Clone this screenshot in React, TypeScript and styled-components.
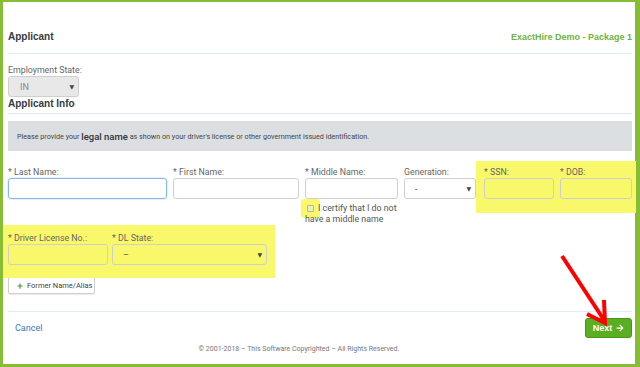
// Import Dependencies
import styled, { createGlobalStyle } from "styled-components";
import type { FunctionComponent } from "react";
import { FaPlus, FaArrowRight } from "react-icons/fa";

// Global Styles
const GlobalStyle = createGlobalStyle`
    html, body {
        margin: 0;
        padding: 0;
        background: #fff;
        overflow: hidden;
    }
    * {
        box-sizing: border-box;
    }
`;

// Define Styled Parts
const Frame = styled.div`
    position: relative;
    width: 640px;
    height: 367px;
    border-style: solid;
    border-color: #86bd35;
    border-width: 2px 5px 3px 3px;
    background: #fff;
    padding: 0 3px 0 5px;
    font-family: Roboto, "Liberation Sans", sans-serif;
    color: #555;
`;
const PageHeader = styled.header`
    display: flex;
    justify-content: space-between;
    align-items: center;
    margin-top: 28px;
    padding-bottom: 9px;
    line-height: 14px;
    border-bottom: 1px solid #dcebf8;
`;
const PageTitle = styled.h1`
    margin: 0;
    font-family: "Liberation Sans", Arial, sans-serif;
    font-size: 10px;
    font-weight: bold;
    color: #333b46;
`;
const PackageName = styled.span`
    font-family: "Liberation Sans", Arial, sans-serif;
    font-size: 9px;
    font-weight: bold;
    color: #6db33f;
`;
const StateBlock = styled.div`
    margin-top: 10px;
`;
const SectionTitle = styled.h2`
    margin: 1px 0 0;
    padding-bottom: 3px;
    font-family: "Liberation Sans", Arial, sans-serif;
    font-size: 10px;
    line-height: 12px;
    font-weight: bold;
    color: #333b46;
    border-bottom: 1px solid #dcebf8;
`;
const NoticeBar = styled.div`
    display: flex;
    align-items: center;
    margin-top: 7px;
    height: 30px;
    padding-left: 9px;
    background: #dcdfe1;
    font-size: 7.2px;
    color: #444;
    white-space: pre;
`;
const NoticeStrong = styled.strong`
    font-size: 9.5px;
    font-weight: 500;
    color: #333;
`;
const FieldRow = styled.div<{ $top: number }>`
    display: flex;
    align-items: flex-start;
    gap: 6px;
    margin-top: ${(p) => p.$top}px;
`;
const Highlight = styled.div<{ $margin: string; $padding: string; $gap: number }>`
    display: flex;
    gap: ${(p) => p.$gap}px;
    margin: ${(p) => p.$margin};
    padding: ${(p) => p.$padding};
    background: #f9f86a;
`;
const Field = styled.div<{ $width: number }>`
    width: ${(p) => p.$width}px;
    flex: none;
`;
const FieldLabel = styled.label`
    display: block;
    font-size: 8.8px;
    line-height: 12px;
    color: #666;
    white-space: nowrap;
`;
const TextBox = styled.div<{ $focused?: boolean }>`
    height: 21px;
    border: 1px solid ${(p) => (p.$focused ? "#86b9e8" : "#cfcfcf")};
    border-radius: 3px;
    background: transparent;
    box-shadow: ${(p) => (p.$focused ? "0 0 2px rgba(102, 175, 233, 0.6)" : "none")};
`;
const SelectBox = styled.div<{ $disabled?: boolean; $indent: number }>`
    display: flex;
    align-items: center;
    justify-content: space-between;
    height: 21px;
    padding: 0 4px 0 ${(p) => p.$indent}px;
    border: 1px solid #cfcfcf;
    border-radius: 3px;
    background: ${(p) => (p.$disabled ? "#e8e8e8" : "transparent")};
    font-size: 9px;
    color: ${(p) => (p.$disabled ? "#888" : "#555")};
`;
const Caret = styled.span`
    font-family: "DejaVu Sans", sans-serif;
    font-size: 6px;
    color: #444;
`;
const CertifyText = styled.div`
    margin-top: 4px;
    font-size: 8.8px;
    line-height: 11px;
    color: #555;
    white-space: nowrap;
`;
const CheckBox = styled.span`
    display: inline-block;
    width: 7px;
    height: 7px;
    margin: 0 4px 0 2px;
    border: 1px solid #b9b58a;
    border-radius: 1px;
    background: #eeeec4;
    box-shadow: 0 0 0 6px #f9f86a;
    vertical-align: -1px;
`;
const AliasButton = styled.button`
    display: flex;
    align-items: center;
    gap: 4px;
    width: 87px;
    height: 17px;
    margin-top: -1px;
    padding: 0 0 0 8px;
    border: 1px solid #cfcfcf;
    border-radius: 2px;
    background: #fff;
    box-shadow: 0 1px 1px rgba(0, 0, 0, 0.08);
    font-family: Roboto, "Liberation Sans", sans-serif;
    font-size: 7.5px;
    color: #444;
    svg {
        color: #3f9a2a;
        width: 6px;
        height: 6px;
    }
`;
const FormFooter = styled.footer`
    display: flex;
    align-items: center;
    justify-content: space-between;
    margin-top: 17px;
    padding-top: 6px;
    border-top: 1px solid #dcebf8;
`;
const CancelLink = styled.a`
    padding-left: 7px;
    font-size: 9px;
    color: #3a76c4;
    text-decoration: none;
`;
const NextButton = styled.button`
    display: flex;
    align-items: center;
    justify-content: center;
    gap: 4px;
    width: 47px;
    height: 20px;
    border: 1px solid #4a9418;
    border-radius: 3px;
    background: #5aae22;
    font-family: "Liberation Sans", Arial, sans-serif;
    font-size: 9px;
    font-weight: bold;
    color: #fff;
    svg {
        width: 8px;
        height: 8px;
    }
`;
const Copyright = styled.p`
    margin: 6px 0 0;
    padding-right: 42px;
    text-align: center;
    font-size: 7px;
    line-height: 10px;
    color: #777;
`;
const Pointer = styled.svg`
    position: absolute;
    left: 547px;
    top: 246px;
    width: 65px;
    height: 85px;
    pointer-events: none;
`;

// Define Page
const App: FunctionComponent = () => {
    return (
        <>
            <GlobalStyle />
            <Frame>
                <PageHeader>
                    <PageTitle>Applicant</PageTitle>
                    <PackageName>ExactHire Demo - Package 1</PackageName>
                </PageHeader>
                <StateBlock>
                    <FieldLabel>Employment State:</FieldLabel>
                    <Field $width={71}>
                        <SelectBox $disabled $indent={11}>
                            IN <Caret>▼</Caret>
                        </SelectBox>
                    </Field>
                </StateBlock>
                <SectionTitle>Applicant Info</SectionTitle>
                <NoticeBar>
                    Please provide your <NoticeStrong>legal name</NoticeStrong> as shown on your driver's license or other government issued identification.
                </NoticeBar>
                <FieldRow $top={15}>
                    <Field $width={159}>
                        <FieldLabel>* Last Name:</FieldLabel>
                        <TextBox $focused />
                    </Field>
                    <Field $width={126}>
                        <FieldLabel>* First Name:</FieldLabel>
                        <TextBox />
                    </Field>
                    <Field $width={93}>
                        <FieldLabel>* Middle Name:</FieldLabel>
                        <TextBox />
                        <CertifyText>
                            <CheckBox />I certify that I do not
                            <br />
                            have a middle name
                        </CertifyText>
                    </Field>
                    <Field $width={72}>
                        <FieldLabel>Generation:</FieldLabel>
                        <SelectBox $indent={10}>
                            - <Caret>▼</Caret>
                        </SelectBox>
                    </Field>
                    <Highlight $margin="-5px -4px 0 -6px" $padding="5px 4px 14px 8px" $gap={6}>
                        <Field $width={70}>
                            <FieldLabel>* SSN:</FieldLabel>
                            <TextBox />
                        </Field>
                        <Field $width={72}>
                            <FieldLabel>* DOB:</FieldLabel>
                            <TextBox />
                        </Field>
                    </Highlight>
                </FieldRow>
                <FieldRow $top={0}>
                    <Highlight $margin="0 0 0 -5px" $padding="7px 8px 13px 5px" $gap={4}>
                        <Field $width={100}>
                            <FieldLabel>* Driver License No.:</FieldLabel>
                            <TextBox />
                        </Field>
                        <Field $width={155}>
                            <FieldLabel>* DL State:</FieldLabel>
                            <SelectBox $indent={10}>
                                – <Caret>▼</Caret>
                            </SelectBox>
                        </Field>
                    </Highlight>
                </FieldRow>
                <AliasButton>
                    <FaPlus /> Former Name/Alias
                </AliasButton>
                <FormFooter>
                    <CancelLink href="#">Cancel</CancelLink>
                    <NextButton>
                        Next <FaArrowRight />
                    </NextButton>
                </FormFooter>
                <Copyright>
                    © 2001-2018 – This Software Copyrighted – All Rights Reserved.
                </Copyright>
                <Pointer viewBox="0 0 65 85">
                    <line x1="12" y1="8" x2="54" y2="72" stroke="#f00" strokeWidth="4" />
                    <polyline
                        points="54,52 55,75 37,66"
                        fill="none"
                        stroke="#f00"
                        strokeWidth="4"
                        strokeLinejoin="miter"
                    />
                </Pointer>
            </Frame>
        </>
    );
};

// Export Page
export default App;
